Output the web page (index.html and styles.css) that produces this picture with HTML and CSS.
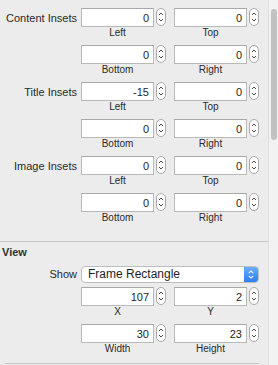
FILE: index.html
```html
<!DOCTYPE html>
<html lang="en">

<head>
  <meta charset="utf-8">
  <title>Inspector</title>
  <link rel="stylesheet" href="styles.css">
</head>

<body>
  <div class="panel">
    <div class="content">
      <div class="insets">
        <div class="row">
          <div class="label">Content Insets</div>
          <div class="cell">
            <div class="control"><div class="field">0</div><svg class="stepper" viewBox="0 0 10 18"><rect x="0.5" y="0.5" width="9" height="17" rx="4.5"/><path d="M3 7 L5 5 L7 7 M3 11 L5 13 L7 11"/></svg></div>
            <div class="caption">Left</div>
          </div>
          <div class="cell">
            <div class="control"><div class="field">0</div><svg class="stepper" viewBox="0 0 10 18"><rect x="0.5" y="0.5" width="9" height="17" rx="4.5"/><path d="M3 7 L5 5 L7 7 M3 11 L5 13 L7 11"/></svg></div>
            <div class="caption">Top</div>
          </div>
        </div>
        <div class="row">
          <div class="label"></div>
          <div class="cell">
            <div class="control"><div class="field">0</div><svg class="stepper" viewBox="0 0 10 18"><rect x="0.5" y="0.5" width="9" height="17" rx="4.5"/><path d="M3 7 L5 5 L7 7 M3 11 L5 13 L7 11"/></svg></div>
            <div class="caption">Bottom</div>
          </div>
          <div class="cell">
            <div class="control"><div class="field">0</div><svg class="stepper" viewBox="0 0 10 18"><rect x="0.5" y="0.5" width="9" height="17" rx="4.5"/><path d="M3 7 L5 5 L7 7 M3 11 L5 13 L7 11"/></svg></div>
            <div class="caption">Right</div>
          </div>
        </div>
        <div class="row">
          <div class="label">Title Insets</div>
          <div class="cell">
            <div class="control"><div class="field">-15</div><svg class="stepper" viewBox="0 0 10 18"><rect x="0.5" y="0.5" width="9" height="17" rx="4.5"/><path d="M3 7 L5 5 L7 7 M3 11 L5 13 L7 11"/></svg></div>
            <div class="caption">Left</div>
          </div>
          <div class="cell">
            <div class="control"><div class="field">0</div><svg class="stepper" viewBox="0 0 10 18"><rect x="0.5" y="0.5" width="9" height="17" rx="4.5"/><path d="M3 7 L5 5 L7 7 M3 11 L5 13 L7 11"/></svg></div>
            <div class="caption">Top</div>
          </div>
        </div>
        <div class="row">
          <div class="label"></div>
          <div class="cell">
            <div class="control"><div class="field">0</div><svg class="stepper" viewBox="0 0 10 18"><rect x="0.5" y="0.5" width="9" height="17" rx="4.5"/><path d="M3 7 L5 5 L7 7 M3 11 L5 13 L7 11"/></svg></div>
            <div class="caption">Bottom</div>
          </div>
          <div class="cell">
            <div class="control"><div class="field">0</div><svg class="stepper" viewBox="0 0 10 18"><rect x="0.5" y="0.5" width="9" height="17" rx="4.5"/><path d="M3 7 L5 5 L7 7 M3 11 L5 13 L7 11"/></svg></div>
            <div class="caption">Right</div>
          </div>
        </div>
        <div class="row">
          <div class="label">Image Insets</div>
          <div class="cell">
            <div class="control"><div class="field">0</div><svg class="stepper" viewBox="0 0 10 18"><rect x="0.5" y="0.5" width="9" height="17" rx="4.5"/><path d="M3 7 L5 5 L7 7 M3 11 L5 13 L7 11"/></svg></div>
            <div class="caption">Left</div>
          </div>
          <div class="cell">
            <div class="control"><div class="field">0</div><svg class="stepper" viewBox="0 0 10 18"><rect x="0.5" y="0.5" width="9" height="17" rx="4.5"/><path d="M3 7 L5 5 L7 7 M3 11 L5 13 L7 11"/></svg></div>
            <div class="caption">Top</div>
          </div>
        </div>
        <div class="row">
          <div class="label"></div>
          <div class="cell">
            <div class="control"><div class="field">0</div><svg class="stepper" viewBox="0 0 10 18"><rect x="0.5" y="0.5" width="9" height="17" rx="4.5"/><path d="M3 7 L5 5 L7 7 M3 11 L5 13 L7 11"/></svg></div>
            <div class="caption">Bottom</div>
          </div>
          <div class="cell">
            <div class="control"><div class="field">0</div><svg class="stepper" viewBox="0 0 10 18"><rect x="0.5" y="0.5" width="9" height="17" rx="4.5"/><path d="M3 7 L5 5 L7 7 M3 11 L5 13 L7 11"/></svg></div>
            <div class="caption">Right</div>
          </div>
        </div>
      </div>

      <div class="separator"></div>

      <div class="view">
        <h2>View</h2>
        <div class="show-row">
          <div class="label">Show</div>
          <div class="popup">
            <span class="popup-text">Frame Rectangle</span>
            <span class="popup-arrows"><svg viewBox="0 0 14 17"><path d="M4.5 7 L7 4.5 L9.5 7 M4.5 10 L7 12.5 L9.5 10"/></svg></span>
          </div>
        </div>
        <div class="row">
          <div class="label"></div>
          <div class="cell">
            <div class="control"><div class="field">107</div><svg class="stepper" viewBox="0 0 10 18"><rect x="0.5" y="0.5" width="9" height="17" rx="4.5"/><path d="M3 7 L5 5 L7 7 M3 11 L5 13 L7 11"/></svg></div>
            <div class="caption">X</div>
          </div>
          <div class="cell">
            <div class="control"><div class="field">2</div><svg class="stepper" viewBox="0 0 10 18"><rect x="0.5" y="0.5" width="9" height="17" rx="4.5"/><path d="M3 7 L5 5 L7 7 M3 11 L5 13 L7 11"/></svg></div>
            <div class="caption">Y</div>
          </div>
        </div>
        <div class="row">
          <div class="label"></div>
          <div class="cell">
            <div class="control"><div class="field">30</div><svg class="stepper" viewBox="0 0 10 18"><rect x="0.5" y="0.5" width="9" height="17" rx="4.5"/><path d="M3 7 L5 5 L7 7 M3 11 L5 13 L7 11"/></svg></div>
            <div class="caption">Width</div>
          </div>
          <div class="cell">
            <div class="control"><div class="field">23</div><svg class="stepper" viewBox="0 0 10 18"><rect x="0.5" y="0.5" width="9" height="17" rx="4.5"/><path d="M3 7 L5 5 L7 7 M3 11 L5 13 L7 11"/></svg></div>
            <div class="caption">Height</div>
          </div>
        </div>
        <div class="separator short"></div>
      </div>
    </div>

    <div class="scrollbar">
      <div class="thumb"></div>
    </div>
  </div>
</body>

</html>
```

FILE: styles.css
```css
html,
body {
  margin: 0;
  padding: 0;
  background: #ececec;
}

body {
  font-family: "Liberation Sans", Arial, sans-serif;
  color: #2a2a2a;
  overflow: hidden;
}

.panel {
  display: flex;
  height: 365px;
}

.content {
  width: 268px;
}

.insets {
  display: flex;
  flex-direction: column;
  gap: 6px;
  padding: 8px 0 17px;
}

.row {
  display: flex;
  align-items: flex-start;
}

.view .row {
  margin-top: 6px;
}

.view .show-row + .row {
  margin-top: 4px;
}

.label {
  width: 77px;
  margin-right: 4px;
  padding-top: 1px;
  text-align: right;
  font-size: 11px;
  line-height: 19px;
}

.cell {
  width: 85px;
}

.cell + .cell {
  margin-left: 8px;
}

.control {
  display: flex;
  gap: 2px;
}

.field {
  width: 73px;
  height: 19px;
  box-sizing: border-box;
  border: 1px solid #b9b9b9;
  border-top-color: #a8a8a8;
  background: #fff;
  padding-right: 4px;
  text-align: right;
  font-size: 11px;
  line-height: 18px;
  color: #1e1e1e;
}

.stepper {
  display: block;
  width: 10px;
  height: 18px;
}

.stepper rect {
  fill: #fff;
  stroke: #a9a9a9;
}

.stepper path {
  fill: none;
  stroke: #4a4a4a;
  stroke-width: 1;
}

.caption {
  width: 73px;
  text-align: center;
  font-size: 10px;
  line-height: 12px;
}

.separator {
  height: 1px;
  background: #c6c6c6;
}

.separator.short {
  width: 254px;
  margin: 8px 0 0 5px;
}

.view h2 {
  margin: 4px 0 0;
  padding-left: 2px;
  font-size: 11px;
  line-height: 13px;
  font-weight: bold;
  color: #333;
}

.show-row {
  display: flex;
  align-items: flex-start;
  margin-top: 7px;
}

.show-row .label {
  padding-top: 0;
  line-height: 17px;
}

.popup {
  display: flex;
  width: 178px;
  height: 17px;
  box-sizing: border-box;
  border: 1px solid #bdbdbd;
  border-radius: 4px;
  background: #fff;
  overflow: hidden;
}

.popup-text {
  flex: 1;
  padding-left: 6px;
  font-size: 12px;
  line-height: 14px;
  color: #1e1e1e;
}

.popup-arrows {
  width: 14px;
  background: linear-gradient(#6aacf9, #2c7ff2);
}

.popup-arrows svg {
  display: block;
  width: 14px;
  height: 15px;
}

.popup-arrows path {
  fill: none;
  stroke: #fff;
  stroke-width: 1.2;
}

.scrollbar {
  width: 10px;
  box-sizing: border-box;
  border-left: 1px solid #dedede;
  background: #f2f2f2;
  padding: 9px 1px 0 2px;
}

.thumb {
  width: 6px;
  height: 131px;
  border-radius: 3px;
  background: #c2c2c2;
}
```
